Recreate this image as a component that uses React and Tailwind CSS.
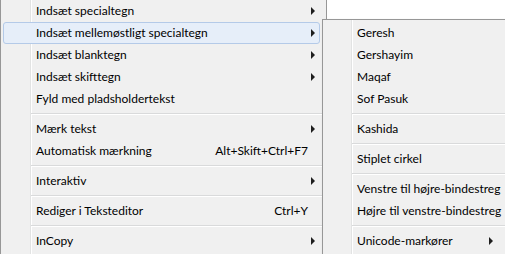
import React from 'react';

const MAIN = [
  { label: 'Indsæt specialtegn', sub: true },
  { label: 'Indsæt mellemøstligt specialtegn', sub: true, active: true },
  { label: 'Indsæt blanktegn', sub: true },
  { label: 'Indsæt skifttegn', sub: true },
  { label: 'Fyld med pladsholdertekst' },
  { sep: true },
  { label: 'Mærk tekst', sub: true },
  { label: 'Automatisk mærkning', key: 'Alt+Skift+Ctrl+F7' },
  { sep: true },
  { label: 'Interaktiv', sub: true },
  { sep: true },
  { label: 'Rediger i Teksteditor', key: 'Ctrl+Y' },
  { sep: true },
  { label: 'InCopy', sub: true },
];

const SUB = [
  { label: 'Geresh' },
  { label: 'Gershayim' },
  { label: 'Maqaf' },
  { label: 'Sof Pasuk' },
  { sep: true },
  { label: 'Kashida' },
  { sep: true },
  { label: 'Stiplet cirkel' },
  { sep: true },
  { label: 'Venstre til højre-bindestreg' },
  { label: 'Højre til venstre-bindestreg' },
  { sep: true },
  { label: 'Unicode-markører', sub: true },
];

function Arrow() {
  return <span className="block h-0 w-0 shrink-0 border-y-[4px] border-y-transparent border-l-[4px] border-l-[#1e1e1e]" />;
}

function Separator({ indent }) {
  return (
    <div className={`flex h-[8px] flex-col justify-center ${indent}`}>
      <div className="h-px bg-[#d9dadb]" />
      <div className="h-px bg-white" />
    </div>
  );
}

function MainRow({ item }) {
  if (item.sep) return <Separator indent="ml-[30px] mr-[2px]" />;
  return (
    <div
      className={`ml-[2px] mr-[6px] flex h-[22px] items-center whitespace-nowrap rounded-[3px] border pl-[32px] pr-[4px] ${
        item.active ? 'border-[#b4cae8] bg-[#e6eef9]' : 'border-transparent'
      }`}
    >
      <span className="flex-1">{item.label}</span>
      {item.key && <span className="mr-[7px]">{item.key}</span>}
      {item.sub && <Arrow />}
    </div>
  );
}

function SubRow({ item }) {
  if (item.sep) return <Separator indent="ml-[29px] mr-[2px]" />;
  return (
    <div className="flex h-[22px] items-center whitespace-nowrap pl-[34px] pr-[20px]">
      <span className="flex-1">{item.label}</span>
      {item.sub && <Arrow />}
    </div>
  );
}

export default function App() {
  return (
    <div
      className="relative h-[254px] w-[505px] overflow-hidden bg-white text-[12px] text-black"
      style={{ fontFamily: 'Lato, "Liberation Sans", sans-serif' }}
    >
      {/* Main context menu */}
      <div className="w-[327px] border-x border-b border-[#979797] bg-[#f0f0f0] bg-[linear-gradient(to_right,#f0f0f0_29px,#e2e3e3_29px,#e2e3e3_30px,#ffffff_30px,#ffffff_31px,#f0f0f0_31px)] pb-[3px]">
        {MAIN.map((item, i) => (
          <MainRow key={i} item={item} />
        ))}
      </div>

      {/* Submenu */}
      <div className="absolute left-[322px] top-[19px] w-[192px] border border-[#979797] bg-[#f0f0f0] bg-[linear-gradient(to_right,#f0f0f0_28px,#e2e3e3_28px,#e2e3e3_29px,#ffffff_29px,#ffffff_30px,#f0f0f0_30px)] py-[2px] shadow-[2px_2px_3px_rgba(0,0,0,0.25)]">
        {SUB.map((item, i) => (
          <SubRow key={i} item={item} />
        ))}
      </div>
    </div>
  );
}
